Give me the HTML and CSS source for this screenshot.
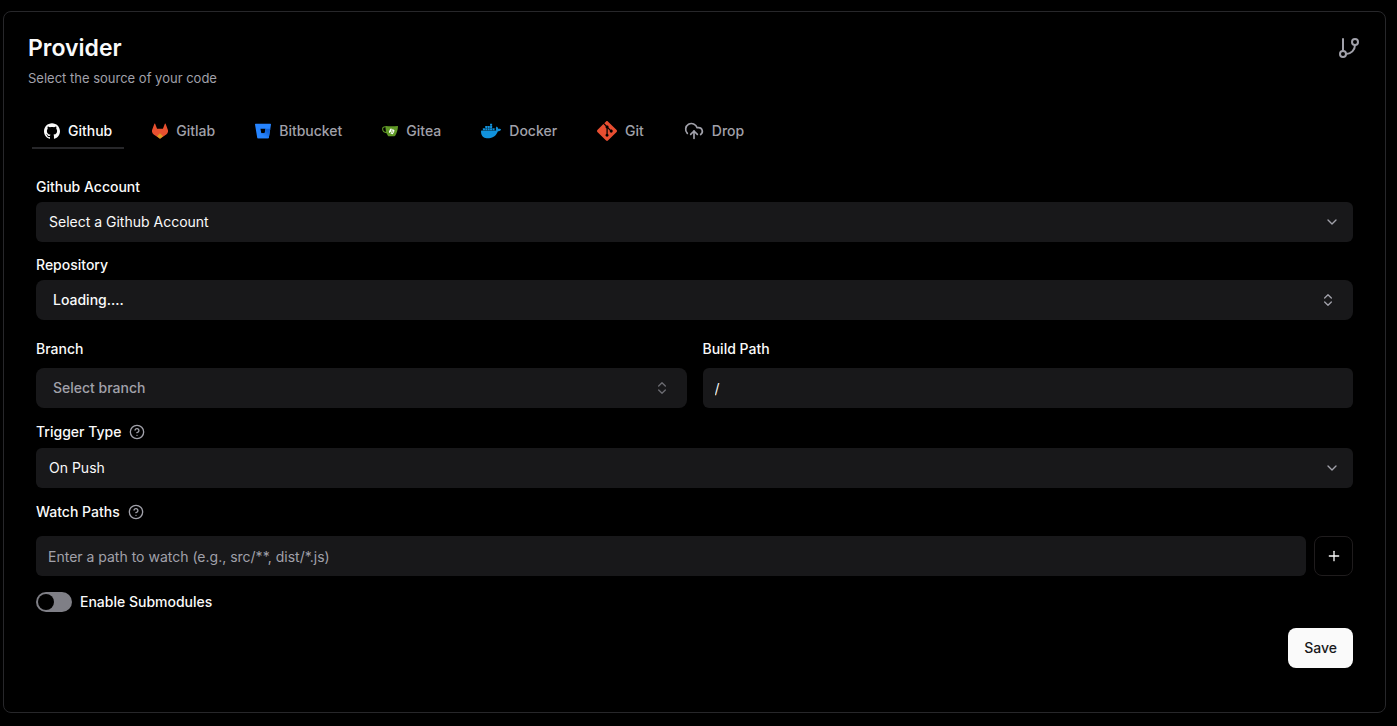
FILE: index.html
```html
<!DOCTYPE html>
<html lang="en">
<head>
    <meta charset="UTF-8">
    <meta name="viewport" content="width=device-width, initial-scale=1.0">
    <title>Provider</title>
    <link rel="stylesheet" href="styles.css">
</head>
<body>
    <main class="card">
        <header class="card-header">
            <div class="card-heading">
                <h1 class="card-title">Provider</h1>
                <p class="card-description">Select the source of your code</p>
            </div>
            <svg class="icon icon-lg" viewBox="0 0 24 24">
                <path d="M6 3v12" />
                <circle cx="18" cy="6" r="3" />
                <circle cx="6" cy="18" r="3" />
                <path d="M18 9a9 9 0 0 1-9 9" />
            </svg>
        </header>

        <div class="tabs" role="tablist">
            <button class="tab active" type="button" role="tab" aria-selected="true">
                <svg class="logo" viewBox="0 0 24 24" fill="currentColor">
                    <path d="M12 .297c-6.63 0-12 5.373-12 12 0 5.303 3.438 9.8 8.205 11.385.6.113.82-.258.82-.577 0-.285-.01-1.04-.015-2.04-3.338.724-4.042-1.61-4.042-1.61C4.422 18.07 3.633 17.7 3.633 17.7c-1.087-.744.084-.729.084-.729 1.205.084 1.838 1.236 1.838 1.236 1.07 1.835 2.809 1.305 3.495.998.108-.776.417-1.305.76-1.605-2.665-.3-5.466-1.332-5.466-5.93 0-1.31.465-2.38 1.235-3.22-.135-.303-.54-1.523.105-3.176 0 0 1.005-.322 3.3 1.23.96-.267 1.98-.399 3-.405 1.02.006 2.04.138 3 .405 2.28-1.552 3.285-1.23 3.285-1.23.645 1.653.24 2.873.12 3.176.765.84 1.23 1.91 1.23 3.22 0 4.61-2.805 5.625-5.475 5.92.42.36.81 1.096.81 2.22 0 1.606-.015 2.896-.015 3.286 0 .315.21.69.825.57C20.565 22.092 24 17.592 24 12.297c0-6.627-5.373-12-12-12" />
                </svg>
                Github
            </button>
            <button class="tab" type="button" role="tab" aria-selected="false">
                <svg class="logo" viewBox="0 0 24 24">
                    <path fill="#e8502f" d="M3.6 1.2a.6.6 0 0 1 1.1 0L7.6 8.6h8.8l2.9-7.4a.6.6 0 0 1 1.1 0l3.2 8.500a6.500 6.500 0 0 1-2.200 7.400L12 23.500 2.600 17.100A6.500 6.500 0 0 1 .4 9.700z" />
                    <path fill="#d99a22" d="M12 15.500l4.500 4.500L12 23.500 7.500 20z" />
                </svg>
                Gitlab
            </button>
            <button class="tab" type="button" role="tab" aria-selected="false">
                <svg class="logo" viewBox="0 0 24 24">
                    <defs>
                        <linearGradient id="bitbucket-shade" x1="1" y1="0.3" x2="0.5" y2="0.8">
                            <stop offset="0.2" stop-color="#1263d6" />
                            <stop offset="1" stop-color="#2684ff" />
                        </linearGradient>
                    </defs>
                    <path fill="#2684ff" d="M.778 1.213a.768.768 0 00-.768.892l3.263 19.81c.084.5.515.868 1.022.873H19.95a.772.772 0 00.77-.646l3.27-20.03a.768.768 0 00-.768-.891zM14.52 15.53H9.522L8.17 8.466h7.561z" />
                    <path fill="url(#bitbucket-shade)" d="M22.950 8.466h-7.219L14.520 15.530H9.522l-5.900 7c.2.160.4.258.673.258H19.950a.772.772 0 00.770-.646z" />
                </svg>
                Bitbucket
            </button>
            <button class="tab" type="button" role="tab" aria-selected="false">
                <svg class="logo" viewBox="0 0 24 24">
                    <path fill="none" stroke="#609926" stroke-width="1.600" d="M7.500 6C4 5.300 1 5.600.9 8.800c0 3.300 2.800 5.600 6.600 5.600" />
                    <path fill="#609926" d="M5.500 4.400c6 .8 12 .8 17.900 0 .5 0 .6.400.6.900-.3 4.700-1.800 9.800-4 13.400-.5.800-1 1.100-1.800 1.100h-7.400c-1 0-1.500-.3-2.200-1.200C6 15 4.800 8.600 5.500 4.400z" />
                    <rect fill="#fff" x="11" y="9" width="7" height="7" rx="1.500" transform="rotate(26 14.500 12.500)" />
                    <path fill="none" stroke="#609926" stroke-width=".8" d="M15.300 9l-2.400 6.500M14.400 11.500l2 1-.9 2.400" />
                    <circle fill="#609926" cx="13" cy="14.300" r=".8" />
                </svg>
                Gitea
            </button>
            <button class="tab" type="button" role="tab" aria-selected="false">
                <svg class="logo logo-md" viewBox="0 0 24 24" fill="#1192dc">
                    <rect x="10.844" y="3.389" width="2.489" height="2.259" rx=".18" />
                    <rect x="5.135" y="6.104" width="2.489" height="2.259" rx=".18" />
                    <rect x="7.990" y="6.104" width="2.489" height="2.259" rx=".18" />
                    <rect x="10.844" y="6.104" width="2.489" height="2.259" rx=".18" />
                    <rect x="2.280" y="8.820" width="2.489" height="2.259" rx=".18" />
                    <rect x="5.135" y="8.820" width="2.489" height="2.259" rx=".18" />
                    <rect x="7.990" y="8.820" width="2.489" height="2.259" rx=".18" />
                    <rect x="10.844" y="8.820" width="2.489" height="2.259" rx=".18" />
                    <rect x="13.798" y="8.820" width="2.489" height="2.259" rx=".18" />
                    <path d="M23.763 9.89c-.065-.051-.672-.51-1.954-.51-.338.001-.676.03-1.01.087-.248-1.7-1.653-2.53-1.716-2.566l-.344-.199-.226.327c-.284.438-.49.922-.612 1.43-.23.97-.09 1.882.403 2.661-.595.332-1.55.413-1.744.42H.751a.751.751 0 00-.75.748 11.376 11.376 0 00.692 4.062c.545 1.428 1.355 2.48 2.41 3.124 1.18.723 3.1 1.137 5.275 1.137.983.003 1.963-.086 2.93-.266a12.248 12.248 0 003.823-1.389c.98-.567 1.86-1.288 2.61-2.136 1.252-1.418 1.998-2.997 2.553-4.4h.221c1.372 0 2.215-.549 2.68-1.009.309-.293.55-.65.707-1.046l.098-.288Z" />
                </svg>
                Docker
            </button>
            <button class="tab" type="button" role="tab" aria-selected="false">
                <svg class="logo logo-md" viewBox="0 0 24 24" fill="#e84e31">
                    <path d="M23.546 10.93L13.067.452c-.604-.603-1.582-.603-2.188 0L8.708 2.627l2.76 2.76c.645-.215 1.379-.07 1.889.441.516.515.658 1.258.438 1.9l2.658 2.66c.645-.223 1.387-.078 1.9.435.721.72.721 1.884 0 2.604-.719.719-1.881.719-2.6 0-.539-.541-.674-1.337-.404-1.996L12.86 8.955v6.525c.176.086.342.203.488.348.713.721.713 1.883 0 2.6-.719.721-1.889.721-2.609 0-.719-.719-.719-1.879 0-2.598.182-.18.387-.316.605-.406V8.835c-.217-.091-.424-.222-.6-.401-.545-.545-.676-1.342-.396-2.009L7.636 3.7.45 10.881c-.6.605-.6 1.584 0 2.189l10.48 10.477c.604.604 1.582.604 2.186 0l10.43-10.43c.605-.603.605-1.582 0-2.187" />
                </svg>
                Git
            </button>
            <button class="tab" type="button" role="tab" aria-selected="false">
                <svg class="icon icon-md" viewBox="0 0 24 24">
                    <path d="M4 14.899A7 7 0 1 1 15.71 8h1.79a4.500 4.500 0 0 1 2.500 8.242" />
                    <path d="M12 12v9" />
                    <path d="m16 16-4-4-4 4" />
                </svg>
                Drop
            </button>
        </div>

        <form class="form">
            <div class="field">
                <label class="label" for="github-account">Github Account</label>
                <div class="select-wrap">
                    <select class="control select" id="github-account">
                        <option>Select a Github Account</option>
                    </select>
                    <svg class="icon select-arrow" viewBox="0 0 24 24"><path d="m6 9 6 6 6-6" /></svg>
                </div>
            </div>

            <div class="field">
                <label class="label" for="repository">Repository</label>
                <button class="control combobox" type="button" id="repository">
                    Loading....
                    <svg class="icon" viewBox="0 0 24 24"><path d="m7 15 5 5 5-5" /><path d="m7 9 5-5 5 5" /></svg>
                </button>
            </div>

            <div class="field-row">
                <div class="field field-wide">
                    <label class="label" for="branch">Branch</label>
                    <button class="control combobox muted" type="button" id="branch">
                        Select branch
                        <svg class="icon" viewBox="0 0 24 24"><path d="m7 15 5 5 5-5" /><path d="m7 9 5-5 5 5" /></svg>
                    </button>
                </div>
                <div class="field field-wide">
                    <label class="label" for="build-path">Build Path</label>
                    <input class="control input" type="text" id="build-path" value="/">
                </div>
            </div>

            <div class="field">
                <div class="label-row">
                    <label class="label" for="trigger-type">Trigger Type</label>
                    <svg class="icon" viewBox="0 0 24 24"><circle cx="12" cy="12" r="10" /><path d="M9.090 9a3 3 0 0 1 5.830 1c0 2-3 3-3 3" /><path d="M12 17h.01" /></svg>
                </div>
                <div class="select-wrap">
                    <select class="control select" id="trigger-type">
                        <option>On Push</option>
                    </select>
                    <svg class="icon select-arrow" viewBox="0 0 24 24"><path d="m6 9 6 6 6-6" /></svg>
                </div>
            </div>

            <div class="field field-watch">
                <div class="label-row">
                    <label class="label" for="watch-path">Watch Paths</label>
                    <svg class="icon" viewBox="0 0 24 24"><circle cx="12" cy="12" r="10" /><path d="M9.090 9a3 3 0 0 1 5.830 1c0 2-3 3-3 3" /><path d="M12 17h.01" /></svg>
                </div>
                <div class="watch-row">
                    <input class="control input" type="text" id="watch-path" placeholder="Enter a path to watch (e.g., src/**, dist/*.js)">
                    <button class="add-button" type="button" aria-label="Add path">
                        <svg class="icon" viewBox="0 0 24 24"><path d="M5 12h14" /><path d="M12 5v14" /></svg>
                    </button>
                </div>
            </div>

            <div class="switch-row">
                <input class="switch" type="checkbox" id="submodules">
                <label class="label" for="submodules">Enable Submodules</label>
            </div>

            <button class="save-button" type="submit">Save</button>
        </form>
    </main>
</body>
</html>
```

FILE: styles.css
```css
* {
    box-sizing: border-box;
}

body {
    margin: 0;
    padding: 11px 11px 13px 3px;
    background-color: #000;
    color: #fafafa;
    font-family: Inter, sans-serif;
    font-size: 14px;
    line-height: 20px;
}

button, input, select {
    margin: 0;
    font: inherit;
    color: inherit;
}

button {
    cursor: pointer;
}

.card {
    padding: 24px 24px 44px;
    border: 1px solid #27272a;
    border-radius: 8px;
}

.card-header {
    display: flex;
    justify-content: space-between;
    align-items: flex-start;
}

.card-heading {
    display: flex;
    flex-direction: column;
    gap: 8px;
}

.card-title {
    margin: 0;
    font-size: 23px;
    line-height: 24px;
    font-weight: 600;
}

.card-description {
    margin: 0;
    color: #a1a1aa;
    font-size: 13px;
}

/* Icons */

.icon {
    width: 16px;
    height: 16px;
    flex-shrink: 0;
    fill: none;
    stroke: #a1a1aa;
    stroke-width: 2;
    stroke-linecap: round;
    stroke-linejoin: round;
}

.icon-md {
    width: 20px;
    height: 20px;
}

.icon-lg {
    width: 24px;
    height: 24px;
}

.logo {
    width: 16px;
    height: 16px;
    flex-shrink: 0;
}

.logo-md {
    width: 20px;
    height: 20px;
}

/* Tabs */

.tabs {
    display: flex;
    gap: 16px;
    margin-top: 25px;
    padding: 0 4px;
}

.tab {
    display: flex;
    align-items: center;
    gap: 8px;
    height: 36px;
    padding: 2px 12px 0;
    border: none;
    border-bottom: 2px solid transparent;
    background: none;
    color: #a1a1aa;
    font-weight: 500;
}

.tab.active {
    border-bottom-color: #27272a;
    color: #fafafa;
}

/* Form */

.form {
    display: flex;
    flex-direction: column;
    gap: 16px;
    padding: 31px 8px 0;
}

.field {
    display: flex;
    flex-direction: column;
    gap: 8px;
}

.field-row {
    display: grid;
    grid-template-columns: 1fr 1fr;
    gap: 16px;
    padding-top: 6px;
}

.field-wide {
    gap: 12px;
}

.field-watch {
    gap: 16px;
}

.label {
    font-weight: 500;
    line-height: 14px;
}

.label-row {
    display: flex;
    align-items: center;
    gap: 8px;
}

.control {
    width: 100%;
    height: 40px;
    border: none;
    border-radius: 6px;
    background-color: #18181a;
}

.select-wrap {
    position: relative;
}

.select {
    display: block;
    padding: 0 40px 0 13px;
    appearance: none;
}

.select-arrow {
    position: absolute;
    top: 12px;
    right: 13px;
    pointer-events: none;
}

.combobox {
    display: flex;
    align-items: center;
    justify-content: space-between;
    padding: 0 17px;
    border-radius: 8px;
    font-weight: 500;
}

.muted {
    color: #a1a1aa;
}

.muted .icon {
    opacity: 0.6;
}

.input {
    padding: 0 12px;
}

.input::placeholder {
    color: #a1a1aa;
    opacity: 1;
}

.watch-row {
    display: flex;
    gap: 8px;
}

.add-button {
    display: flex;
    align-items: center;
    justify-content: center;
    flex-shrink: 0;
    width: 39px;
    height: 40px;
    padding: 0;
    border: 1px solid #1f1c1d;
    border-radius: 8px;
    background: none;
}

.add-button .icon {
    stroke: #fafafa;
}

.switch-row {
    display: flex;
    align-items: center;
    gap: 8px;
}

.switch {
    width: 36px;
    height: 20px;
    padding: 2px;
    border-radius: 10px;
    background-color: #7f7f86;
    appearance: none;
    cursor: pointer;
}

.switch::before {
    content: "";
    display: block;
    width: 16px;
    height: 16px;
    border-radius: 50%;
    background-color: #000;
}

.switch:checked::before {
    margin-left: auto;
}

.save-button {
    align-self: flex-end;
    height: 40px;
    padding: 0 16px;
    border: none;
    border-radius: 8px;
    background-color: #fafafa;
    color: #18181b;
    font-weight: 500;
}
```
